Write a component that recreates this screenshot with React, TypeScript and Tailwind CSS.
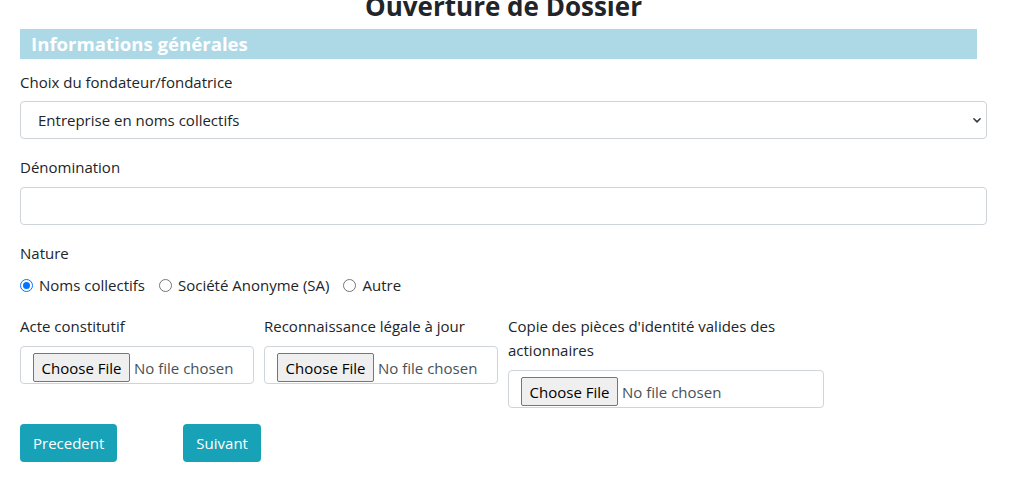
import React from "react";

const FONT = { fontFamily: '"Open Sans", "Noto Sans", Arial, sans-serif' };

function FileBox({ className = "" }: { className?: string }) {
  return (
    <div className={`h-[38px] border border-[#ced4da] rounded-[4px] bg-white flex items-start pt-[6px] pl-[12px] ${className}`}>
      <span className="h-[29px] w-[97px] shrink-0 flex items-center justify-center border border-[#767676] rounded-[2px] bg-[#efefef] text-[#000] text-[15px]">
        Choose File
      </span>
      <span className="ml-[4px] h-[29px] flex items-center text-[15px] text-[#495057] whitespace-nowrap">No file chosen</span>
    </div>
  );
}

function Radio({ checked, label }: { checked?: boolean; label: string }) {
  return (
    <label className="flex items-center gap-[6px]">
      {checked ? (
        <span className="w-[13px] h-[13px] rounded-full border-[1px] border-[#0075ff] bg-white flex items-center justify-center">
          <span className="w-[7px] h-[7px] rounded-full bg-[#0075ff]" />
        </span>
      ) : (
        <span className="w-[13px] h-[13px] rounded-full border border-[#767676] bg-white" />
      )}
      <span>{label}</span>
    </label>
  );
}

export default function App() {
  return (
    <div style={FONT} className="w-[1020px] h-[490px] overflow-hidden bg-white text-[#212529] text-[15px] leading-[24px]">
      <div className="w-[967px] ml-[20px]">
        <h2 className="text-center font-bold text-[26px] leading-[34px] mt-[-11px] h-[40px]">Ouverture de Dossier</h2>
        <div className="w-[957px] h-[30px] bg-[#add8e6] text-white font-bold text-[18.6px] leading-[30px] pl-[11px]">
          Informations générales
        </div>

        <div className="mt-[11px]">Choix du fondateur/fondatrice</div>
        <div className="mt-[7px] h-[38px] border border-[#ced4da] rounded-[4px] flex items-center justify-between pl-[17px] pr-[3px]">
          <span>Entreprise en noms collectifs</span>
          <svg width="12" height="10" viewBox="0 0 16 16">
            <path d="M3 6l5 5 5-5" fill="none" stroke="#343a40" strokeWidth="2.5" strokeLinecap="round" strokeLinejoin="round" />
          </svg>
        </div>

        <div className="mt-[16px]">Dénomination</div>
        <div className="mt-[8px] h-[38px] border border-[#ced4da] rounded-[4px]" />

        <div className="mt-[16px]">Nature</div>
        <div className="mt-[8px] flex items-center gap-[14px]">
          <Radio checked label="Noms collectifs" />
          <Radio label="Société Anonyme (SA)" />
          <Radio label="Autre" />
        </div>

        <div className="mt-[17px] flex items-start gap-[10px]">
          <div className="w-[234px]">
            <div>Acte constitutif</div>
            <FileBox className="mt-[8px]" />
          </div>
          <div className="w-[234px]">
            <div>Reconnaissance légale à jour</div>
            <FileBox className="mt-[8px]" />
          </div>
          <div className="w-[316px]">
            <div>Copie des pièces d'identité valides des actionnaires</div>
            <FileBox className="mt-[8px]" />
          </div>
        </div>

        <div className="mt-[16px] flex items-center gap-[66px]">
          <button className="h-[38px] px-[13px] rounded-[4px] bg-[#17a2b8] text-white">Precedent</button>
          <button className="h-[38px] px-[13px] rounded-[4px] bg-[#17a2b8] text-white">Suivant</button>
        </div>
      </div>
    </div>
  );
}
